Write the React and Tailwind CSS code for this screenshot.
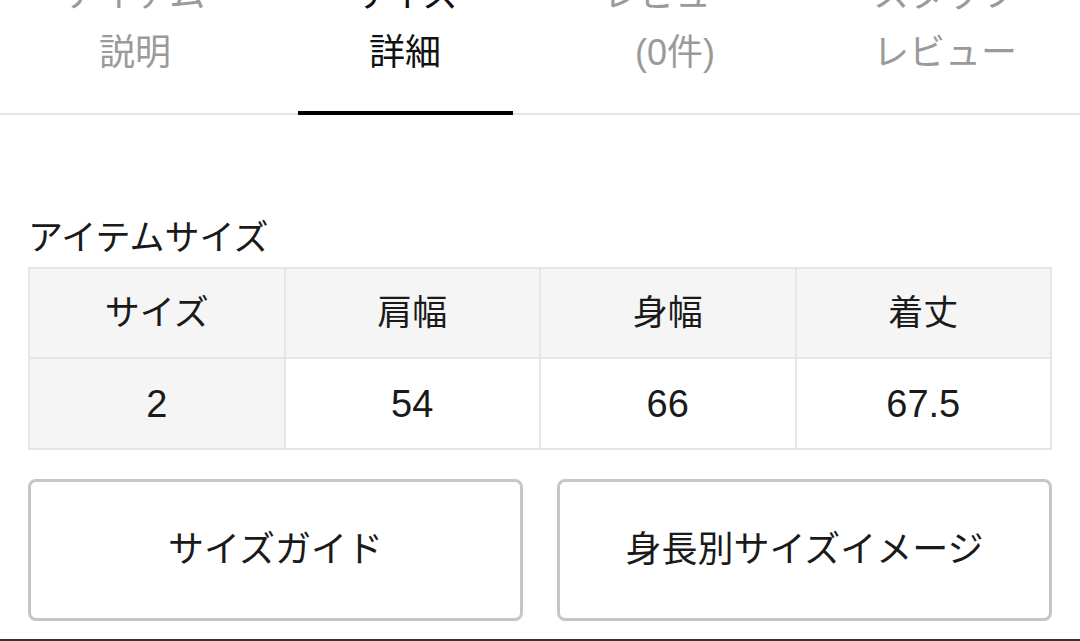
import React from "react";

const tabs = [
  { top: "アイテム", bottom: "説明", active: false },
  { top: "サイズ", bottom: "詳細", active: true },
  { top: "レビュー", bottom: "(0件)", active: false },
  { top: "スタッフ", bottom: "レビュー", active: false },
];

export default function App() {
  return (
    <div className="w-[1080px] h-[641px] overflow-hidden bg-white flex flex-col font-['Liberation_Sans','Noto_Sans_CJK_JP',sans-serif]">
      <div className="flex h-[115px] shrink-0 border-b-2 border-[#e4e4e4]">
        {tabs.map((t) => (
          <div
            key={t.bottom}
            className="relative flex-1 flex flex-col items-center justify-end pb-[31px]"
          >
            <div
              className={`flex flex-col items-center text-[36px] leading-[58px] ${
                t.active ? "text-[#111]" : "text-[#9a9a9a]"
              }`}
            >
              <span>{t.top}</span>
              <span>{t.bottom}</span>
            </div>
            {t.active && (
              <span className="absolute left-[28px] right-[27px] bottom-[-2px] h-[4px] bg-black" />
            )}
          </div>
        ))}
      </div>

      <div className="flex flex-col px-[28px] pt-[103px]">
        <div className="h-[40px] leading-[40px] text-[35px] text-[#1a1a1a] mb-[9px]">
          アイテムサイズ
        </div>

        <div className="grid grid-cols-4 gap-[2px] p-[2px] bg-[#e6e6e6]">
          {["サイズ", "肩幅", "身幅", "着丈"].map((h) => (
            <div
              key={h}
              className="h-[88px] bg-[#f5f5f5] flex items-center justify-center text-[35px] text-[#1a1a1a]"
            >
              {h}
            </div>
          ))}
          {["2", "54", "66", "67.5"].map((v, i) => (
            <div
              key={v}
              className={`h-[89px] flex items-center justify-center pt-[2px] text-[38px] text-[#1a1a1a] ${
                i === 0 ? "bg-[#f5f5f5]" : "bg-white"
              }`}
            >
              {v}
            </div>
          ))}
        </div>

        <div className="flex gap-[34px] mt-[29px]">
          {["サイズガイド", "身長別サイズイメージ"].map((b) => (
            <button
              key={b}
              className="flex-1 h-[142px] border-[3px] border-[#c6c6c6] rounded-[8px] bg-white flex items-center justify-center text-[36px] text-[#1a1a1a]"
            >
              {b}
            </button>
          ))}
        </div>
      </div>

      <div className="mt-auto h-[2px] bg-[#333] shrink-0" />
    </div>
  );
}
